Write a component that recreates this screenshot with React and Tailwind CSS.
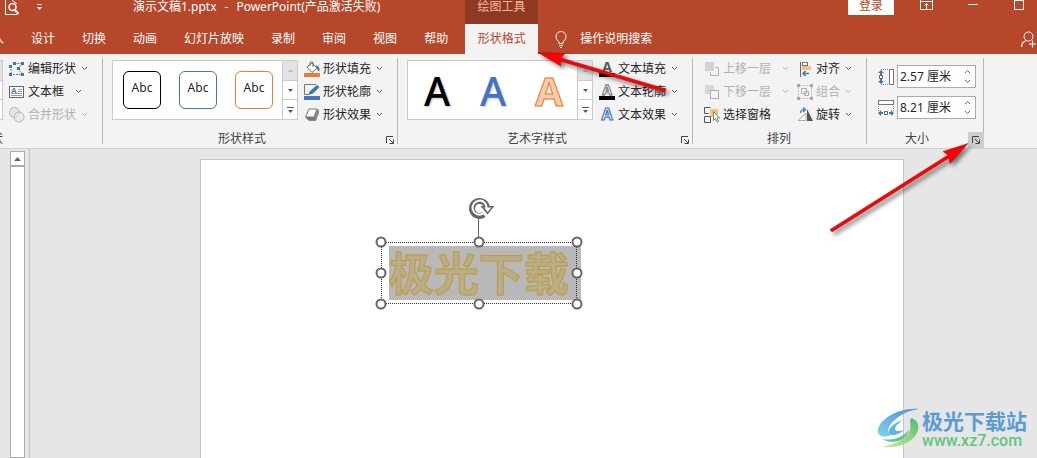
import { useState } from 'react'
import clsx from 'clsx'

const TABS = ['设计', '切换', '动画', '幻灯片放映', '录制', '审阅', '视图', '帮助']

const Svg = ({ w = 16, h = 16, className, children }) => (
  <svg width={w} height={h} viewBox={`0 0 ${w} ${h}`} fill="none" className={clsx('shrink-0', className)} aria-hidden="true">
    {children}
  </svg>
)

/* ---------- small glyphs ---------- */

const Chevron = ({ up }) => (
  <Svg w={7} h={5}>
    <path d={up ? 'M1 4l2.5-2.5L6 4' : 'M1 1l2.5 2.5L6 1'} stroke="currentColor" />
  </Svg>
)

const EditPointsIcon = () => (
  <Svg>
    <path d="M5.5 2.5h7M2 5v7M4 13.5h8M12.5 4L8.5 7.5l4.5 5" stroke="#777" strokeDasharray="2 1" />
    <path d="M0 4h3v3H0zM4 1h3v3H4zM12 1h3v3h-3zM8 6h3v3H8zM0 12h3v3H0zM12 12h3v3h-3z" fill="#3a78b5" />
  </Svg>
)

const TextBoxIcon = () => (
  <Svg>
    <rect x=".5" y="2.5" width="14" height="11" fill="#fff" stroke="#666" />
    <text x="2" y="9" fontSize="8" fontWeight="700" fill="#3a78b5" fontFamily="Liberation Sans">A</text>
    <path d="M9 5.5h4M9 7.5h4M2 9.5h11M2 11.5h11" stroke="#999" />
  </Svg>
)

const MergeIcon = () => (
  <Svg>
    <circle cx="5.5" cy="5.5" r="5" fill="#e9e4e9" stroke="#b4b0b4" />
    <circle cx="10" cy="10" r="5" fill="#e9e4e9" fillOpacity=".6" stroke="#b4b0b4" />
  </Svg>
)

const FillIcon = () => (
  <Svg>
    <path d="M3 6l5-4 5 5-5 4.500z" fill="#fff" stroke="#666" />
    <path d="M6 5V1.500Q7.500-.5 9 1.500V6" stroke="#666" />
    <path d="M12 4q4 1 3.500 6-2 1-2-1.500z" fill="#3a78b5" />
    <path d="M0 12h16v4H0z" fill="#ed7d31" />
  </Svg>
)

const OutlineIcon = () => (
  <Svg>
    <path d="M12 .5H.5v10H5" stroke="#777" />
    <path d="M5 10.500l1-3.500L13 1l2.500 2L9 9.500z" fill="#3a78b5" />
    <path d="M5 10.500l1-3 2 2z" fill="#555" />
    <path d="M0 12h16v4H0z" fill="#4472c4" />
  </Svg>
)

const EffectIcon = () => (
  <Svg>
    <path d="M2 11l3 3h7l3-8v-3l-2-1z" fill="#8a8a8a" />
    <path d="M5 2h8l-3 8H1.500z" fill="#fff" stroke="#777" />
    <path d="M1.500 10l2.500 3h7l-1-3z" fill="#777" />
  </Svg>
)

const LetterIcon = ({ fill, stroke, bar, glow }) => (
  <Svg>
    <text
      x="8" y={bar ? 11 : 13} textAnchor="middle" fontSize={bar ? 14 : 16} fontWeight="700" fontFamily="Open Sans"
      fill={fill} stroke={stroke} strokeWidth={glow ? 1.2 : 0.8}
    >
      A
    </text>
    {bar && <path d="M0 12h16v4H0z" fill="#000" />}
  </Svg>
)

const ForwardIcon = () => (
  <Svg>
    <path d="M1 1h9v9H1z" fill="#d6d0d8" />
    <path d="M11 6.500h3.500v8h-8V11" stroke="#b3adb5" />
  </Svg>
)

const BackwardIcon = () => (
  <Svg>
    <path d="M1 1h9v9H1z" fill="#dbd6dc" />
    <rect x="6.500" y="6.500" width="8" height="8" fill="#f8f5f8" stroke="#b0a8b2" />
  </Svg>
)

const SelectPaneIcon = () => (
  <Svg>
    <path d="M6 2h8v8H6z" fill="#f2c47c" />
    <path d="M6.500.5h-6v6h4M.5 9.500h6v6h-6z" stroke="#555" />
    <path d="M9.500 4.500v9l2-2 1.500 3.500 1.500-.7-1.500-3.300h2.500z" fill="#fff" stroke="#666" strokeWidth=".8" />
  </Svg>
)

const AlignIcon = () => (
  <Svg>
    <path d="M3.500 1v15" stroke="#666" />
    <rect x="5.500" y="1.500" width="5" height="3" fill="#fff" stroke="#777" />
    <path d="M5 5h9v4H5z" fill="#f0c27b" />
    <path d="M12 12.500H6M8.500 10L6 12.500 8.500 15" stroke="#3a78b5" strokeWidth="1.500" />
  </Svg>
)

const GroupIcon = () => (
  <Svg>
    <path d="M3 1.500h10M1.500 3v10M14.500 3v10M3 14.500h10" stroke="#c2bcc2" strokeDasharray="2 1" />
    <path d="M4.500 4.500h5v5h-5zM7.500 7.500h4v4h-4z" stroke="#b3adb3" />
    <path d="M0 0h3v3H0zM13 0h3v3h-3zM0 13h3v3H0zM13 13h3v3h-3z" fill="#aaa4aa" />
  </Svg>
)

const RotateIcon = () => (
  <Svg>
    <path d="M1 13.500h8V6z" fill="#fff" stroke="#aaa" />
    <path d="M10 2v12h6z" fill="#555" />
    <path d="M3.500 6q0-3.500 4-3.500M6 .5l2.500 2L6 5" stroke="#3a78b5" strokeWidth="1.200" />
  </Svg>
)

const HeightIcon = () => (
  <Svg>
    <path d="M3 .5h8M3 15.500h8" stroke="#888" strokeDasharray="1 1" />
    <rect x="11.500" y=".5" width="4" height="15" fill="#fff" stroke="#777" />
    <path d="M3 1l3 3H4v2H2V4H0zM3 15l3-3H4v-2H2v2H0z" fill="#3a78b5" />
    <path d="M1.500 6.500h3v3h-3z" fill="#fff" stroke="#666" />
  </Svg>
)

const WidthIcon = () => (
  <Svg>
    <path d="M.5 6v6M15.500 6v6" stroke="#888" strokeDasharray="1 1" />
    <rect x=".5" y=".5" width="15" height="4" fill="#fff" stroke="#777" />
    <path d="M0 13l3-3v2h2v2H3v2zM16 13l-3-3v2h-2v2h2v2z" fill="#3a78b5" />
    <path d="M6.500 11.500h3v3h-3z" fill="#fff" stroke="#666" />
  </Svg>
)

const LauncherIcon = () => (
  <Svg w={8} h={8}>
    <path d="M.5 7V.5H7M3 3l4 4M7.500 3.500v4h-4" stroke="#444" />
  </Svg>
)

/* ---------- ribbon pieces ---------- */

function Command({ icon, label, menu = true, disabled, wide }) {
  return (
    <button
      disabled={disabled}
      className={clsx('flex h-[23px] items-center whitespace-nowrap', disabled ? 'text-[#b1b1b1]' : 'text-[#262626]')}
    >
      {icon}
      <span className="ml-[3px]">{label}</span>
      {menu && <span className={clsx(wide ? 'ml-[11px]' : 'ml-[5px]', disabled ? 'text-[#b1b1b1]' : 'text-[#555]')}><Chevron /></span>}
    </button>
  )
}

function Group({ label, launcher, highlighted, className, children }) {
  return (
    <section className={clsx('relative flex shrink-0 flex-col', className)}>
      <div className="flex h-[75px] items-start pt-[3px]">{children}</div>
      <div className="flex h-[19px] items-center justify-center leading-4">{label}</div>
      {launcher && (
        <button
          aria-label={label}
          className={clsx('absolute right-0 bottom-0 z-10 flex size-4 items-center justify-center', highlighted && 'bg-[#cdcdcd]')}
        >
          <LauncherIcon />
        </button>
      )}
      <span className="absolute top-1 right-0 h-[86px] w-px bg-[#b5b5b5]" />
    </section>
  )
}

function Gallery({ children }) {
  return (
    <div className="mt-[3px] flex h-[60px] w-[186px] shrink-0 border border-[#cbcbcb] bg-white">
      <div className="flex flex-1 items-center justify-between pr-[9px] pl-2.5">{children}</div>
      <div className="flex w-[15px] flex-col divide-y divide-[#cbcbcb] border-l border-[#cbcbcb]">
        <button aria-label="▲" className="flex flex-1 items-center justify-center bg-[#e3e3e3]">
          <Svg w={5} h={3}><path d="M0 3l2.500-3L5 3z" fill="#bbb" /></Svg>
        </button>
        <button aria-label="▼" className="flex flex-1 items-center justify-center">
          <Svg w={5} h={3}><path d="M0 0h5L2.500 3z" fill="#555" /></Svg>
        </button>
        <button aria-label="▼" className="flex flex-1 items-center justify-center">
          <Svg w={7} h={6}><path d="M0 0h7v1H0zM1 3h5L3.500 6z" fill="#555" /></Svg>
        </button>
      </div>
    </div>
  )
}

const Swatch = ({ className }) => (
  <button className={clsx('size-[38px] rounded-md border bg-white pb-1 text-xs text-[#262626]', className)}>Abc</button>
)

const ArtLetter = ({ className }) => (
  <button className={clsx("w-[38px] pt-0.5 font-['Noto_Sans'] text-[40px] leading-10", className)}>A</button>
)

function SizeField({ icon, label, initial }) {
  const [value, setValue] = useState(initial)
  const step = (d) => setValue(v => `${(parseFloat(v) + d).toFixed(2)} 厘米`)
  return (
    <label className="flex items-center gap-[3px]">
      {icon}
      <span className="flex h-[23px] w-[79px] border border-[#ababab] bg-white">
        <input
          aria-label={label}
          value={value}
          onChange={e => setValue(e.target.value)}
          className="w-[61px] bg-transparent pl-0.5 text-[#262626] outline-none"
        />
        <span className="flex flex-1 flex-col items-center justify-around text-[#666]">
          <button aria-label="+" onClick={() => step(0.1)}><Chevron up /></button>
          <button aria-label="-" onClick={() => step(-0.1)}><Chevron /></button>
        </span>
      </span>
    </label>
  )
}

function Header() {
  return (
    <header className="bg-[#b7472a] text-white">
      <div className="flex h-6 items-start">
        <div className="flex w-[465px] shrink-0 items-start">
          <Svg className="ml-1">
            <path d="M1.500 0v14.500H13M8 0l5 4" stroke="#fff" />
            <circle cx="8.500" cy="7" r="3.500" stroke="#fff" strokeWidth="1.500" />
            <path d="M11 10l3.500 4" stroke="#fff" strokeWidth="2" />
          </Svg>
          <Svg w={5} h={6} className="mt-1 ml-[17px]">
            <path d="M0 0h5v1H0zM0 3h5L2.500 6z" fill="#fff" />
          </Svg>
          <h1 className="ml-[91px] flex gap-2 leading-3.5 whitespace-nowrap">
            <span>演示文稿1.pptx</span>
            <span>-</span>
            <span>PowerPoint(产品激活失败)</span>
          </h1>
        </div>
        <div className="flex h-6 w-[73px] shrink-0 justify-center bg-[#8f3822] leading-3.5 text-[#f4b8a2]">绘图工具</div>
        <div className="ml-auto flex items-start">
          <button className="h-[15px] w-[46px] rounded-b-[1px] bg-white pb-[3px] leading-3 text-[#b7472a]">登录</button>
          <button aria-label="⬆" className="ml-[26px]">
            <Svg w={13} h={10}>
              <path d="M.5-1v10.500h12V-1M0 1.500h13M6.500 9V4M4.500 5.500l2-2 2 2" stroke="#fff" />
            </Svg>
          </button>
          <button aria-label="−" className="mt-1 ml-[35px] h-px w-2.5 bg-white" />
          <button aria-label="□" className="mr-[13px] ml-9 h-2.5 w-2.5 border border-white" />
        </div>
      </div>
      <nav className="flex h-[30px] items-center whitespace-nowrap">
        <div className="-ml-2 flex gap-[27px]">
          <button>入</button>
          {TABS.map(t => <button key={t}>{t}</button>)}
        </div>
        <button className="ml-[17px] h-full w-[73px] bg-[#f3f3f3] text-[#b7472a]">形状格式</button>
        <button className="ml-[17px] flex items-center gap-[13px]">
          <Svg w={12} h={17}>
            <path d="M4 12.500V11Q1 8.500 1 5.500a5 5 0 0110 0Q11 8.500 8 11v1.500zM4 14.500h4M5 16.500h2" stroke="#fff" />
          </Svg>
          操作说明搜索
        </button>
        <button aria-label="+" className="ml-auto">
          <Svg w={16} h={17}>
            <circle cx="7.500" cy="5.500" r="4.500" stroke="#fff" />
            <path d="M.5 16q0-5 5-6.500M8 13h7M11.500 9.500v7" stroke="#fff" strokeWidth="1.200" />
          </Svg>
        </button>
      </nav>
    </header>
  )
}

function Ribbon() {
  return (
    <div className="flex h-[95px] border-b border-[#cfcfcf] bg-[#f3f3f3] text-[#444]">
      <Group className="w-[103px]" label={<span className="mr-auto -ml-[9px]">状</span>}>
        <div className="mt-[3px] flex h-[60px] w-[3px] flex-col divide-y divide-[#cbcbcb] border-y border-r border-[#cbcbcb] bg-white">
          <span className="flex-1 bg-[#e3e3e3]" />
          <span className="flex-1" />
          <span className="flex-1" />
        </div>
        <div className="ml-1.5">
          <Command icon={<EditPointsIcon />} label="编辑形状" />
          <Command icon={<TextBoxIcon />} label="文本框" wide />
          <Command icon={<MergeIcon />} label="合并形状" disabled />
        </div>
      </Group>

      <Group className="w-[295px] pr-[26px] pl-[9px]" label="形状样式" launcher>
        <Gallery>
          <Swatch className="border-black" />
          <Swatch className="border-[#4472c4]" />
          <Swatch className="border-[#ed7d31]" />
        </Gallery>
        <div className="ml-1.5">
          <Command icon={<FillIcon />} label="形状填充" />
          <Command icon={<OutlineIcon />} label="形状轮廓" />
          <Command icon={<EffectIcon />} label="形状效果" />
        </div>
      </Group>

      <Group className="w-[295px] pr-[26px] pl-[9px]" label="艺术字样式" launcher>
        <Gallery>
          <ArtLetter className="font-medium text-black [text-shadow:1px_1px_2px_#bbb]" />
          <ArtLetter className="font-medium text-[#4472c4] [text-shadow:1px_1px_2px_#ccc]" />
          <ArtLetter className="font-bold text-[#f8cbad] [-webkit-text-stroke:1px_#ed7d31] [text-shadow:0_0_1px_#ed7d31]" />
        </Gallery>
        <div className="ml-1.5">
          <Command icon={<LetterIcon fill="#555" bar />} label="文本填充" />
          <Command icon={<LetterIcon fill="#fff" stroke="#555" bar />} label="文本轮廓" />
          <Command icon={<LetterIcon fill="#fff" stroke="#3a78b5" glow />} label="文本效果" />
        </div>
      </Group>

      <Group className="w-[174px] pr-[13px] pl-[11px]" label="排列">
        <div className="shrink-0">
          <Command icon={<ForwardIcon />} label="上移一层" disabled wide />
          <Command icon={<BackwardIcon />} label="下移一层" disabled wide />
          <Command icon={<SelectPaneIcon />} label="选择窗格" menu={false} />
        </div>
        <div className="ml-2">
          <Command icon={<AlignIcon />} label="对齐" />
          <Command icon={<GroupIcon />} label="组合" disabled />
          <Command icon={<RotateIcon />} label="旋转" />
        </div>
      </Group>

      <Group className="w-[117px] pl-[11px]" label={<span className="mr-7">大小</span>} launcher highlighted>
        <div className="flex flex-col gap-2 pt-2">
          <SizeField icon={<HeightIcon />} label="高度" initial="2.57 厘米" />
          <SizeField icon={<WidthIcon />} label="宽度" initial="8.21 厘米" />
        </div>
      </Group>
    </div>
  )
}

// handles sit on the corners and edge centres of the selection box, in percent
const HANDLES = [[0, 0], [50, 0], [100, 0], [0, 50], [100, 50], [0, 100], [50, 100], [100, 100]]

function WordArt() {
  return (
    <div className="absolute top-[82px] left-[180px] h-[62px] w-[196px]">
      <div className="absolute top-1 left-2 h-[54px] w-48 bg-[#b8b8b8] font-['Noto_Sans_CJK_SC'] text-[45px] leading-[52px] font-bold whitespace-nowrap text-[#b9ae88] [-webkit-text-stroke:1px_#bd9c3c]">
        极光下载
      </div>
      <div className="absolute inset-0 border border-dotted border-[#333]" />
      <svg width="28" height="46" viewBox="0 0 28 46" fill="none" className="absolute -top-[45px] left-[87px]">
        <path d="M10.500 21v20" stroke="#666" />
        <path d="M15.800 17.600A7.500 7.500 0 1119 11" stroke="#666" strokeWidth="6" />
        <path d="M12.500 9h14L19.500 17.500z" fill="#666" />
        <path d="M16.300 10.500h7L19.500 15z" fill="#fff" />
        <path d="M15 16.700A7 7 0 1118.500 11.500" stroke="#fff" strokeWidth="2" />
      </svg>
      {HANDLES.map(([x, y]) => (
        <span
          key={`${x}-${y}`}
          className="absolute size-[11px] -translate-x-1/2 -translate-y-1/2 rounded-full border-2 border-[#666] bg-white"
          style={{ left: `${x}%`, top: `${y}%` }}
        />
      ))}
    </div>
  )
}

function Workspace() {
  return (
    <main className="flex flex-1 bg-[#e6e6e6]">
      <div className="flex w-[30px] shrink-0 flex-col border-r border-[#c0c0c0] pt-0.5 pl-2.5">
        <button aria-label="▲" className="flex h-[15px] w-[15px] items-center justify-center border border-[#ababab] bg-white">
          <Svg w={7} h={4}><path d="M0 4l3.500-4L7 4z" fill="#666" /></Svg>
        </button>
        <div className="w-[15px] flex-1 border border-[#ababab] bg-white" />
      </div>
      <div className="relative mt-2.5 mr-[133px] ml-[170px] flex-1 border border-b-0 border-[#c6c6c6] bg-white">
        <WordArt />
      </div>
    </main>
  )
}

function Arrows() {
  return (
    <svg width="520" height="240" viewBox="520 0 520 240" className="pointer-events-none absolute top-0 left-[520px] z-20 drop-shadow-[3px_3px_2px_rgba(0,0,0,0.5)]" aria-hidden="true">
      <g fill="#f00" stroke="#a01010" strokeWidth=".5">
        <path d="M538 52.500l27 1-4 4.500 105 31-1 3-105-31 1 5z" />
        <path d="M968 143.500l-25 8 5 3.500-118 74.500 2 2.500 117-74 1 5.500z" />
      </g>
    </svg>
  )
}

function Watermark() {
  return (
    <div className="absolute right-2.5 bottom-2 z-10 flex items-center gap-0.5">
      <svg width="42" height="42" viewBox="0 0 42 42" aria-hidden="true">
        <defs>
          <linearGradient id="sky" x1="0" y1="1" x2="1" y2="0">
            <stop offset="0" stopColor="#7fd0f0" />
            <stop offset="1" stopColor="#4a8fd8" />
          </linearGradient>
          <linearGradient id="leaf" x1="0" y1="1" x2="1" y2="0">
            <stop offset="0" stopColor="#d8ec90" />
            <stop offset="1" stopColor="#4fbd78" />
          </linearGradient>
        </defs>
        <path d="M41 1C22-1 1 11 0 22c-1 6 6 8 14 5-6-2-5-9 4-16C26 4 34 2 41 1z" fill="url(#sky)" />
        <path d="M25 12c-8 2-16 9-14 13 2 4 10 2 15-3-5 2-9 1-9-1 0-3 5-7 8-9z" fill="#62b8dc" />
        <path d="M33 10c11 3 9 16-1 23-9 6-20 7-29 6 13-3 27-7 29-17 1-5-1-9 1-12z" fill="url(#leaf)" />
        <path d="M4 31c10 2 20-1 27-9-1 9-14 16-27 9z" fill="#5cc39a" />
      </svg>
      <div className="flex w-[105px] flex-col">
        <span className="text-[21px] leading-6 font-bold whitespace-nowrap text-[#5b9bd5]">极光下载站</span>
        <span className="font-['Roboto'] text-base leading-4 font-medium text-[#62c47f]">www.xz7.com</span>
      </div>
    </div>
  )
}

export default function App() {
  return (
    <div className="relative flex min-h-screen flex-col overflow-hidden font-['Noto_Sans','Noto_Sans_CJK_SC',sans-serif] text-xs">
      <Header />
      <Ribbon />
      <Workspace />
      <Arrows />
      <Watermark />
    </div>
  )
}
